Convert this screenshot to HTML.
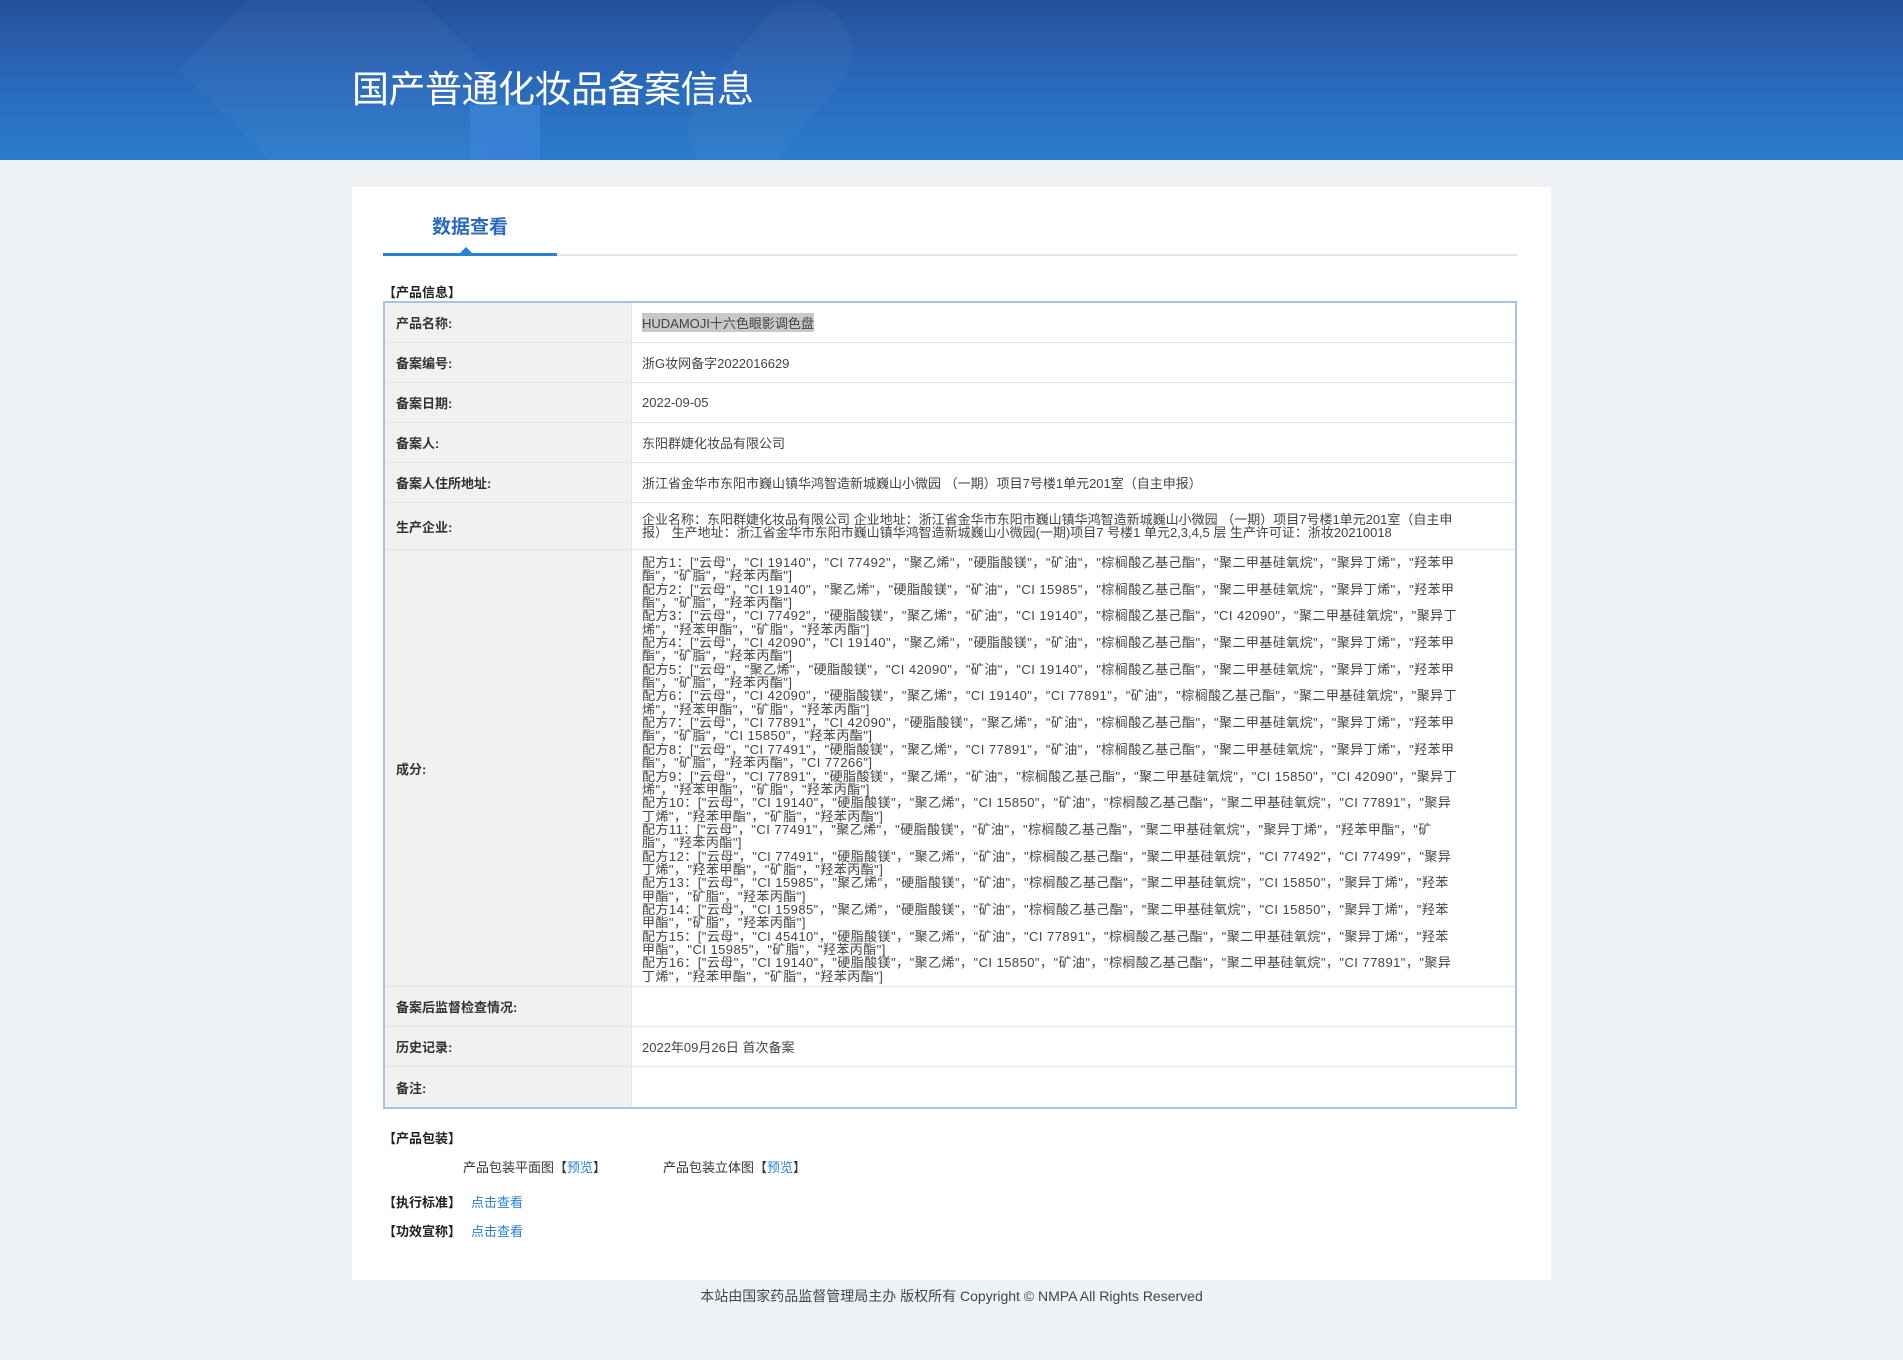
<!DOCTYPE html>
<html><head><meta charset="utf-8">
<style>
*{margin:0;padding:0;box-sizing:border-box}
body{width:1903px;height:1360px;background:#eff2f5;font-family:"Liberation Sans","Noto Sans CJK SC",sans-serif;color:#333;position:relative;overflow:hidden}
.hd{position:absolute;left:0;top:0;width:1903px;height:160px;background:linear-gradient(180deg,#25509a 0%,#2a66b8 45%,#2a7ccc 100%);overflow:hidden}
.hd .s1{position:absolute;left:470px;top:105px;width:70px;height:80px;background:#3b82d6;opacity:.8}
.hd .s2{position:absolute;left:215px;top:-20px;width:280px;height:220px;background:rgba(255,255,255,.03);transform:rotate(45deg)}
.hd .s3{position:absolute;left:720px;top:-10px;width:100px;height:200px;border-radius:50px;background:rgba(255,255,255,.03);transform:rotate(40deg)}
.hd h1{position:absolute;left:352px;top:64px;font-size:37px;font-weight:normal;color:#fff;line-height:44px;font-family:"Noto Sans CJK SC",sans-serif;letter-spacing:-0.5px}
.card{position:absolute;left:352px;top:187px;width:1199px;height:1093px;background:#fff}
.tab{position:absolute;left:31px;top:26px;width:174px;text-align:center;font-size:19px;font-weight:bold;color:#2a6bbf;line-height:30px}
.tl{position:absolute;left:31px;top:67px;width:1134px;height:2px;background:#e6e6e6}
.tb{position:absolute;left:31px;top:66px;width:174px;height:3px;background:#2a80d6}
.tri{position:absolute;left:108px;top:60px;width:0;height:0;border-left:6px solid transparent;border-right:6px solid transparent;border-bottom:6px solid #2a80d6}
.sec{position:absolute;left:31px;font-size:13px;font-weight:bold;color:#222}
.tbl{position:absolute;left:31px;top:114px;width:1134px;border:2px solid #a9c3e6}
.r{display:flex;border-bottom:1px solid #e4e4e4}
.r:last-child{border-bottom:none}
.l{width:247px;background:#f1f1f1;font-size:13px;font-weight:bold;color:#333;padding-left:11px;display:flex;align-items:center;border-right:1px solid #e4e4e4}
.v{flex:1;font-size:13px;color:#444;padding-left:10px;display:flex;align-items:center;overflow:hidden}
.ing{display:block;padding-top:6px;line-height:13.35px;white-space:nowrap;font-size:13px;letter-spacing:.45px}
.hl{background:#c8c8c8}
.lk{color:#2a80d6}
.pk{position:absolute;font-size:13px;color:#333}
.ft{position:absolute;left:0;width:1903px;top:1286px;text-align:center;font-size:14px;color:#444;padding-left:0}
</style></head><body>
<div class="hd"><div class="s2"></div><div class="s3"></div><div class="s1"></div><h1>国产普通化妆品备案信息</h1></div>
<div class="card">
<div class="tab">数据查看</div>
<div class="tl"></div><div class="tb"></div><div class="tri"></div>
<div class="sec" style="top:95px">【产品信息】</div>
<div class="tbl">
<div class="r" style="height:40px"><div class="l">产品名称:</div><div class="v"><span class="hl">HUDAMOJI十六色眼影调色盘</span></div></div>
<div class="r" style="height:40px"><div class="l">备案编号:</div><div class="v">浙G妆网备字2022016629</div></div>
<div class="r" style="height:40px"><div class="l">备案日期:</div><div class="v">2022-09-05</div></div>
<div class="r" style="height:40px"><div class="l">备案人:</div><div class="v">东阳群婕化妆品有限公司</div></div>
<div class="r" style="height:40px"><div class="l">备案人住所地址:</div><div class="v">浙江省金华市东阳市巍山镇华鸿智造新城巍山小微园 （一期）项目7号楼1单元201室（自主申报）</div></div>
<div class="r" style="height:47px"><div class="l">生产企业:</div><div class="v" style="line-height:13.5px"><div style="white-space:nowrap">企业名称：东阳群婕化妆品有限公司 企业地址：浙江省金华市东阳市巍山镇华鸿智造新城巍山小微园 （一期）项目7号楼1单元201室（自主申<br>报） 生产地址：浙江省金华市东阳市巍山镇华鸿智造新城巍山小微园(一期)项目7 号楼1 单元2,3,4,5 层 生产许可证：浙妆20210018</div></div></div>
<div class="r" style="height:437px"><div class="l">成分:</div><div class="v" style="align-items:flex-start"><div class="ing">
配方1：["云母"，"CI 19140"，"CI 77492"，"聚乙烯"，"硬脂酸镁"，"矿油"，"棕榈酸乙基己酯"，"聚二甲基硅氧烷"，"聚异丁烯"，"羟苯甲<br>酯"，"矿脂"，"羟苯丙酯"]<br>
配方2：["云母"，"CI 19140"，"聚乙烯"，"硬脂酸镁"，"矿油"，"CI 15985"，"棕榈酸乙基己酯"，"聚二甲基硅氧烷"，"聚异丁烯"，"羟苯甲<br>酯"，"矿脂"，"羟苯丙酯"]<br>
配方3：["云母"，"CI 77492"，"硬脂酸镁"，"聚乙烯"，"矿油"，"CI 19140"，"棕榈酸乙基己酯"，"CI 42090"，"聚二甲基硅氧烷"，"聚异丁<br>烯"，"羟苯甲酯"，"矿脂"，"羟苯丙酯"]<br>
配方4：["云母"，"CI 42090"，"CI 19140"，"聚乙烯"，"硬脂酸镁"，"矿油"，"棕榈酸乙基己酯"，"聚二甲基硅氧烷"，"聚异丁烯"，"羟苯甲<br>酯"，"矿脂"，"羟苯丙酯"]<br>
配方5：["云母"，"聚乙烯"，"硬脂酸镁"，"CI 42090"，"矿油"，"CI 19140"，"棕榈酸乙基己酯"，"聚二甲基硅氧烷"，"聚异丁烯"，"羟苯甲<br>酯"，"矿脂"，"羟苯丙酯"]<br>
配方6：["云母"，"CI 42090"，"硬脂酸镁"，"聚乙烯"，"CI 19140"，"CI 77891"，"矿油"，"棕榈酸乙基己酯"，"聚二甲基硅氧烷"，"聚异丁<br>烯"，"羟苯甲酯"，"矿脂"，"羟苯丙酯"]<br>
配方7：["云母"，"CI 77891"，"CI 42090"，"硬脂酸镁"，"聚乙烯"，"矿油"，"棕榈酸乙基己酯"，"聚二甲基硅氧烷"，"聚异丁烯"，"羟苯甲<br>酯"，"矿脂"，"CI 15850"，"羟苯丙酯"]<br>
配方8：["云母"，"CI 77491"，"硬脂酸镁"，"聚乙烯"，"CI 77891"，"矿油"，"棕榈酸乙基己酯"，"聚二甲基硅氧烷"，"聚异丁烯"，"羟苯甲<br>酯"，"矿脂"，"羟苯丙酯"，"CI 77266"]<br>
配方9：["云母"，"CI 77891"，"硬脂酸镁"，"聚乙烯"，"矿油"，"棕榈酸乙基己酯"，"聚二甲基硅氧烷"，"CI 15850"，"CI 42090"，"聚异丁<br>烯"，"羟苯甲酯"，"矿脂"，"羟苯丙酯"]<br>
配方10：["云母"，"CI 19140"，"硬脂酸镁"，"聚乙烯"，"CI 15850"，"矿油"，"棕榈酸乙基己酯"，"聚二甲基硅氧烷"，"CI 77891"，"聚异<br>丁烯"，"羟苯甲酯"，"矿脂"，"羟苯丙酯"]<br>
配方11：["云母"，"CI 77491"，"聚乙烯"，"硬脂酸镁"，"矿油"，"棕榈酸乙基己酯"，"聚二甲基硅氧烷"，"聚异丁烯"，"羟苯甲酯"，"矿<br>脂"，"羟苯丙酯"]<br>
配方12：["云母"，"CI 77491"，"硬脂酸镁"，"聚乙烯"，"矿油"，"棕榈酸乙基己酯"，"聚二甲基硅氧烷"，"CI 77492"，"CI 77499"，"聚异<br>丁烯"，"羟苯甲酯"，"矿脂"，"羟苯丙酯"]<br>
配方13：["云母"，"CI 15985"，"聚乙烯"，"硬脂酸镁"，"矿油"，"棕榈酸乙基己酯"，"聚二甲基硅氧烷"，"CI 15850"，"聚异丁烯"，"羟苯<br>甲酯"，"矿脂"，"羟苯丙酯"]<br>
配方14：["云母"，"CI 15985"，"聚乙烯"，"硬脂酸镁"，"矿油"，"棕榈酸乙基己酯"，"聚二甲基硅氧烷"，"CI 15850"，"聚异丁烯"，"羟苯<br>甲酯"，"矿脂"，"羟苯丙酯"]<br>
配方15：["云母"，"CI 45410"，"硬脂酸镁"，"聚乙烯"，"矿油"，"CI 77891"，"棕榈酸乙基己酯"，"聚二甲基硅氧烷"，"聚异丁烯"，"羟苯<br>甲酯"，"CI 15985"，"矿脂"，"羟苯丙酯"]<br>
配方16：["云母"，"CI 19140"，"硬脂酸镁"，"聚乙烯"，"CI 15850"，"矿油"，"棕榈酸乙基己酯"，"聚二甲基硅氧烷"，"CI 77891"，"聚异<br>丁烯"，"羟苯甲酯"，"矿脂"，"羟苯丙酯"]
</div></div></div>
<div class="r" style="height:40px"><div class="l">备案后监督检查情况:</div><div class="v"></div></div>
<div class="r" style="height:40px"><div class="l">历史记录:</div><div class="v">2022年09月26日 首次备案</div></div>
<div class="r" style="height:40px"><div class="l">备注:</div><div class="v"></div></div>
</div>
<div class="sec" style="top:941px">【产品包装】</div>
<div class="pk" style="left:111px;top:970px">产品包装平面图【<span class="lk">预览</span>】</div>
<div class="pk" style="left:311px;top:970px">产品包装立体图【<span class="lk">预览</span>】</div>
<div class="sec" style="top:1005px">【执行标准】<span class="lk" style="font-weight:normal;margin-left:10px">点击查看</span></div>
<div class="sec" style="top:1034px">【功效宣称】<span class="lk" style="font-weight:normal;margin-left:10px">点击查看</span></div>
</div>
<div class="ft">本站由国家药品监督管理局主办 版权所有 Copyright © NMPA All Rights Reserved</div>
</body></html>
